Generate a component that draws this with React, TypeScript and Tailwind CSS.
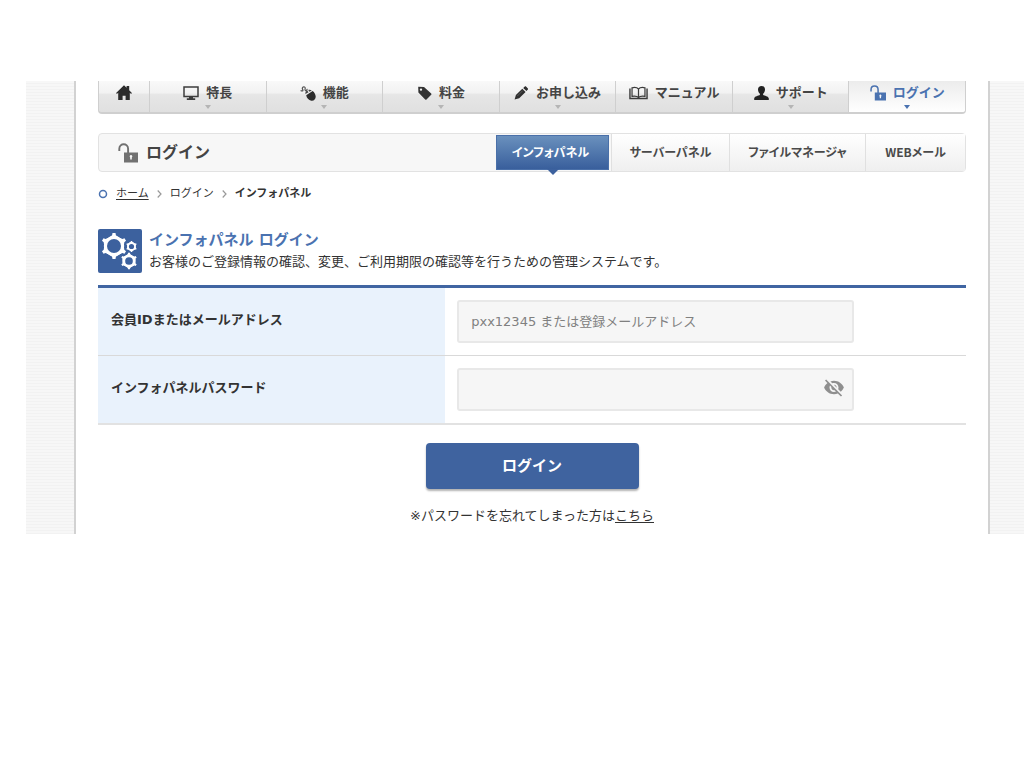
import { useState, type ReactNode } from "react";

function HomeIcon() {
  return (
    <svg width="16" height="15" viewBox="0 0 16 15" fill="#2c2c2c" aria-hidden="true">
      <path d="M8 .3 10.600 2.800V1h2.600v4.300L15.900 8l-.8.9-1.300-1.100V15H9.600v-4.200H6.600V15H2.200V7.800L.9 8.900.1 8z" />
    </svg>
  );
}

function MonitorIcon() {
  return (
    <svg width="16" height="14" viewBox="0 0 16 14" aria-hidden="true">
      <path d="M1 1h14v9.600H1z" fill="none" stroke="#3c3c3c" strokeWidth="1.500" />
      <path d="M6 11h4v1.300h2.200V14H3.800v-1.700H6z" fill="#3c3c3c" />
    </svg>
  );
}

function MouseIcon() {
  return (
    <svg width="16" height="15" viewBox="0 0 16 15" aria-hidden="true">
      <path d="M.6 4.400c1.600 1 3 .6 2-1C1.800 1.800 3 .3 4.600 1c1.600.8-.4 2.600.8 3.600.8.600 1.800-.4 1.600-1.800" fill="none" stroke="#555" strokeWidth="1.200" />
      <path d="M6.200 9.200 12.600 5c1.800 1.200 3 3.600 3.100 5.600.1 2.700-1.900 4.500-4.400 4.100-2.600-.4-4.700-2.900-5.100-5.500z" fill="#2c2c2c" />
      <path d="M5.400 8c-.2-1.600.6-2.900 1.800-3.500l1.400 1.700zM8.200 4.100c1.200-.5 2.600-.2 3.600.3L9.500 5.800z" fill="#444" />
    </svg>
  );
}

function TagIcon() {
  return (
    <svg width="15" height="14" viewBox="0 0 15 14" aria-hidden="true">
      <path fillRule="evenodd" d="M1.200.8 7 .9l7.200 6.500c.4.400.4.900 0 1.300l-4.700 4.700c-.4.400-.9.400-1.300 0L1.400 6.600zM4 2.400a1.200 1.200 0 1 0 0 2.400 1.200 1.200 0 0 0 0-2.400z" fill="#333" />
    </svg>
  );
}

function PencilIcon() {
  return (
    <svg width="15" height="14" viewBox="0 0 15 14" aria-hidden="true">
      <path d="m.6 13.600 1.300-4.500L8.300 2.700l3.300 3.200-6.400 6.300zM9.200 1.900 10.800.5c.4-.3.800-.3 1.200 0l1.900 1.900c.4.400.4.800 0 1.200l-1.500 1.500z" fill="#2f2f2f" />
      <path d="m3.400 10 5.300-5.300" stroke="#777" strokeWidth=".6" />
    </svg>
  );
}

function BookIcon() {
  return (
    <svg width="19" height="14" viewBox="0 0 20 14" fill="none" stroke="#3c3c3c" aria-hidden="true">
      <path d="M10 2.800C8.600 1.300 5.500 1 3.200 1.500v9c2.300-.4 5.400-.1 6.800 1.300 1.400-1.400 4.500-1.700 6.800-1.300v-9C14.500 1 11.400 1.300 10 2.800zV12" strokeWidth="1.300" />
      <path d="M1 2.200v10.600h18V2.200" strokeWidth="1.500" />
    </svg>
  );
}

function PersonIcon() {
  return (
    <svg width="15" height="14" viewBox="0 0 15 14" fill="#222" aria-hidden="true">
      <path d="M7.500 0C9.600 0 11 1.300 11 3.500c0 1.800-.8 3.500-1.900 4.200v1.200c1.400.8 5.400 1.200 5.700 3.400V14H.2v-1.700c.3-2.200 4.300-2.600 5.700-3.400V7.700C4.800 7 4 5.300 4 3.500 4 1.300 5.400 0 7.500 0z" />
    </svg>
  );
}

function UnlockIcon({ size, color }: { size: number; color: string }) {
  return (
    <svg width={size} height={size} viewBox="0 0 20 20" aria-hidden="true">
      <path d="M1.300 8V5.800c0-6 8.800-6 8.800 0V10" fill="none" stroke={color} strokeWidth="1.900" />
      <path fillRule="evenodd" d="M6 9.500h14V19.500H6zM13 12a1.400 1.400 0 0 0-.8 2.500v2h1.600v-2A1.400 1.400 0 0 0 13 12z" fill={color} />
    </svg>
  );
}

function Gear({ x, y, scale, hole }: { x: number; y: number; scale: number; hole: number }) {
  return (
    <g transform={`translate(${x} ${y}) scale(${scale})`}>
      {[0, 60, 120, 180, 240, 300].map((angle) => (
        <path key={angle} d="M-5.500-8-1.900-10.800-1.500-13H1.500L1.900-10.800 5.500-8z" fill="#fff" transform={`rotate(${angle})`} />
      ))}
      <circle r="10.200" fill="#fff" />
      <circle r={hole} fill="#3c619e" />
    </g>
  );
}

function GearsBadge() {
  return (
    <svg className="shrink-0" width="44" height="44" viewBox="0 0 44 44" aria-hidden="true">
      <rect width="44" height="44" rx="2" fill="#3c619e" />
      <Gear x={16} y={17} scale={1} hole={7} />
      <Gear x={33.500} y={17.500} scale={0.430} hole={6} />
      <Gear x={31} y={32} scale={0.640} hole={6} />
    </svg>
  );
}

function HiddenEyeIcon() {
  return (
    <svg width="20" height="18" viewBox="1 2.500 22 20" fill="#8f8f8f" aria-hidden="true">
      <path d="M12 7c2.760 0 5 2.240 5 5 0 .65-.13 1.260-.36 1.830l2.920 2.920c1.510-1.260 2.700-2.890 3.430-4.750-1.730-4.390-6-7.500-11-7.500-1.400 0-2.740.25-3.980.7l2.160 2.160C10.740 7.130 11.350 7 12 7zM2 4.270l2.280 2.280.46.46C3.080 8.300 1.780 10.020 1 12c1.730 4.390 6 7.500 11 7.500 1.550 0 3.030-.3 4.380-.84l.42.42L19.730 22 21 20.730 3.270 3 2 4.270zM7.530 9.800l1.550 1.550c-.05.21-.08.43-.08.65 0 1.660 1.340 3 3 3 .22 0 .44-.03.65-.08l1.550 1.550c-.67.33-1.410.53-2.200.53-2.760 0-5-2.240-5-5 0-.79.2-1.530.53-2.200zm4.310-.78l3.150 3.150.02-.16c0-1.660-1.340-3-3-3l-.17.01z" />
    </svg>
  );
}

function Caret({ color }: { color: string }) {
  return (
    <svg width="6" height="4" viewBox="0 0 6 4" aria-hidden="true">
      <path d="M0 0h6L3 4z" fill={color} />
    </svg>
  );
}

type NavEntry = { label: string; icon: ReactNode; menu: boolean; active?: boolean };

const NAV: NavEntry[] = [
  { label: "特長", icon: <MonitorIcon />, menu: true },
  { label: "機能", icon: <MouseIcon />, menu: true },
  { label: "料金", icon: <TagIcon />, menu: true },
  { label: "お申し込み", icon: <PencilIcon />, menu: true },
  { label: "マニュアル", icon: <BookIcon />, menu: false },
  { label: "サポート", icon: <PersonIcon />, menu: true },
  { label: "ログイン", icon: <UnlockIcon size={16} color="#4a72b0" />, menu: true, active: true },
];

function MainNav() {
  return (
    <nav className="flex h-[33px] overflow-hidden rounded-b border-x border-b-2 border-[#cfcfcf] bg-[linear-gradient(to_bottom,#f9f9f9_0%,#f2f2f2_38%,#e6e6e6_44%,#e0e0e0_100%)]">
      <a href="#home" aria-label="ホーム" className="flex w-[51px] justify-center border-r border-[#cfcfcf] pt-1">
        <HomeIcon />
      </a>
      {NAV.map((item) => (
        <a
          key={item.label}
          href="#nav"
          className={
            item.active
              ? "flex flex-1 flex-col items-center bg-linear-to-b from-[#ececec] to-white text-[#4a72b0]"
              : "flex flex-1 flex-col items-center border-r border-[#cfcfcf] text-[#444]"
          }
        >
          <span className="flex h-6 items-center gap-[7px] whitespace-nowrap text-[13px] font-bold">
            {item.icon}
            {item.label}
          </span>
          {item.menu && <Caret color={item.active ? "#4a72b0" : "#b5b5b5"} />}
        </a>
      ))}
    </nav>
  );
}

const tabClass =
  "flex items-center justify-center border-l border-[#e0e0e0] bg-linear-to-b from-white to-[#efefef] pb-0.5";

function TitleBar() {
  return (
    <div className="mt-[19px] flex h-[39px] rounded-sm border border-[#e2e2e2] bg-[#f7f7f7]">
      <h1 className="flex flex-1 items-center gap-2 pl-[19px] text-[16px] font-bold text-[#444]">
        <UnlockIcon size={20} color="#717171" />
        ログイン
      </h1>
      <nav className="flex whitespace-nowrap font-['Noto_Sans_CJK_JP',sans-serif] text-[12px] font-bold text-[#4a4a4a] [font-feature-settings:'palt']">
        <a
          href="#info"
          className="relative my-px mr-0.5 flex w-[113px] items-center justify-center border border-[#4a70a9] bg-linear-to-b from-[#6a90bd] to-[#395f9c] pr-1 pb-0.5 text-white"
        >
          インフォパネル
          <svg className="absolute top-full left-1/2 -translate-x-1/2" width="12" height="6" viewBox="0 0 12 6" aria-hidden="true">
            <path d="M0 0h12L6 6z" fill="#3c619e" />
          </svg>
        </a>
        <a href="#server" className={`${tabClass} w-[118px]`}>サーバーパネル</a>
        <a href="#files" className={`${tabClass} w-[136px]`}>ファイルマネージャ</a>
        <a href="#mail" className={`${tabClass} w-[100px]`}>WEBメール</a>
      </nav>
    </div>
  );
}

function Chevron() {
  return (
    <svg width="5" height="8" viewBox="0 0 5 8" aria-hidden="true">
      <path d="m.7.500 3.300 3.500L.7 7.500" fill="none" stroke="#999" strokeWidth="1.200" />
    </svg>
  );
}

const inputClass =
  "block h-[43px] w-full rounded-[3px] border-2 border-[#e8e8e8] bg-[#f6f6f6] pl-3 text-[13px] text-[#333] outline-none placeholder:text-[#808080]";

export default function App() {
  const [visible, setVisible] = useState(false);

  return (
    <div className="min-h-screen bg-white pt-[81px] pl-[26px] font-['DejaVu_Sans','Noto_Sans_CJK_JP',sans-serif] text-[#333]">
      <div className="bg-[repeating-linear-gradient(to_bottom,#f7f7f7_0px,#f7f7f7_2px,#f2f2f2_2px,#f2f2f2_3px)] pr-[34px] pl-[48px]">
        <main className="border-x-2 border-[#d2d2d2] bg-white px-[22px] pb-2">
          <MainNav />
          <TitleBar />

          <nav aria-label="パンくず" className="mt-3 flex h-5 items-center gap-2 text-[11px]">
            <span className="flex items-center gap-2">
              <svg width="10" height="10" viewBox="0 0 10 10" aria-hidden="true">
                <circle cx="5" cy="5" r="3.500" fill="none" stroke="#4a72b0" strokeWidth="1.500" />
              </svg>
              <a href="#home" className="underline underline-offset-2">ホーム</a>
            </span>
            <Chevron />
            <span>ログイン</span>
            <Chevron />
            <strong>インフォパネル</strong>
          </nav>

          <header className="mt-[25px] flex gap-[7px]">
            <GearsBadge />
            <div>
              <h2 className="text-[15px] leading-[22px] font-bold text-[#4a72b0]">インフォパネル ログイン</h2>
              <p className="text-[13px] leading-[22px]">
                お客様のご登録情報の確認、変更、ご利用期限の確認等を行うための管理システムです。
              </p>
            </div>
          </header>

          <form onSubmit={(event) => event.preventDefault()}>
            <div className="mt-3 border-t-[3px] border-[#4065a2]">
              <div className="flex h-[68px] border-b border-[#d9d9d9]">
                <label htmlFor="member" className="w-2/5 bg-[#e9f2fc] pt-[22px] pl-[13px] text-[13px] leading-5 font-bold">
                  会員IDまたはメールアドレス
                </label>
                <div className="w-3/5 pt-3 pr-28 pl-3">
                  <input id="member" type="text" placeholder="pxx12345 または登録メールアドレス" className={inputClass} />
                </div>
              </div>
              <div className="flex h-[69px] border-b-2 border-[#e2e2e2]">
                <label htmlFor="password" className="w-2/5 bg-[#e9f2fc] pt-[22px] pl-[13px] text-[13px] leading-5 font-bold">
                  インフォパネルパスワード
                </label>
                <div className="w-3/5 pt-3 pr-28 pl-3">
                  <div className="relative">
                    <input id="password" type={visible ? "text" : "password"} className={inputClass} />
                    <button
                      type="button"
                      aria-label="パスワードを表示"
                      onClick={() => setVisible(!visible)}
                      className="absolute inset-y-0 right-2.5 flex items-center pb-1"
                    >
                      <HiddenEyeIcon />
                    </button>
                  </div>
                </div>
              </div>
            </div>
            <button
              type="submit"
              className="mx-auto mt-[18px] block h-[46px] w-[213px] rounded bg-[#3f639f] text-[15px] font-bold text-white shadow-[0_2px_2px_rgba(0,0,0,0.3)]"
            >
              ログイン
            </button>
          </form>
          <p className="mt-[17px] text-center text-[13px] leading-5">
            ※パスワードを忘れてしまった方は
            <a href="#reset" className="underline underline-offset-2">こちら</a>
          </p>
        </main>
      </div>
    </div>
  );
}
